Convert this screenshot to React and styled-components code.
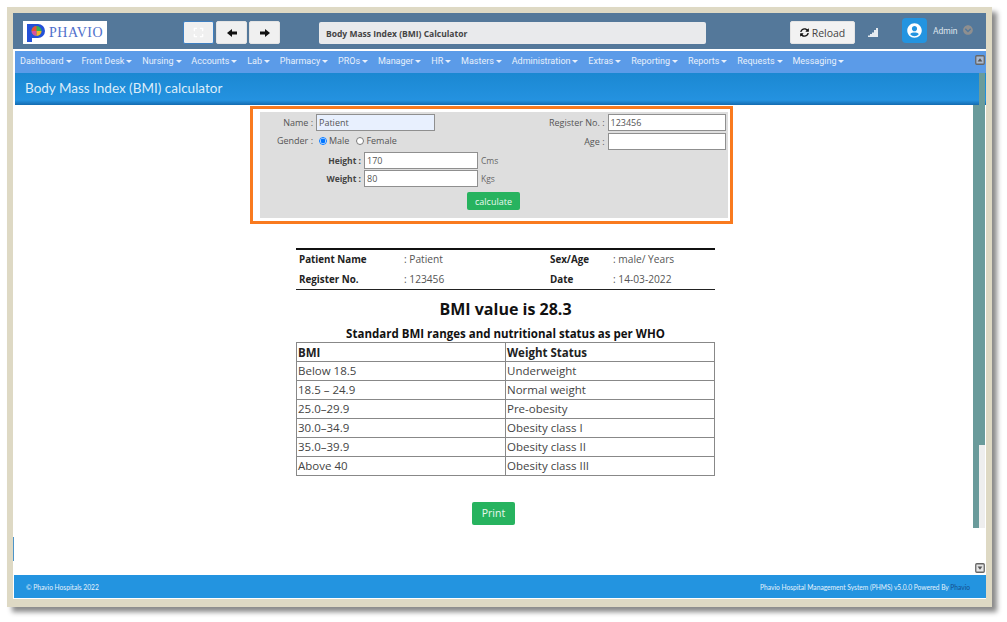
import React from 'react';
import styled, { createGlobalStyle } from 'styled-components';
import { FaExpand, FaSyncAlt, FaUserCircle, FaChevronCircleDown } from 'react-icons/fa';

const GlobalStyle = createGlobalStyle`
  html, body {
    margin: 0;
    padding: 0;
    background: #fff;
    overflow: hidden;
  }
  * { box-sizing: border-box; }
`;

const Page = styled.div`
  width: 1007px;
  height: 622px;
  padding: 7px 0 0 7px;
  font-family: "Open Sans", sans-serif;
`;

const Frame = styled.div`
  position: relative;
  width: 985px;
  height: 600px;
  border: solid #ded9c4;
  border-width: 6px 6px 8px 6px;
  box-shadow: 5px 5px 5px #8a8a8a;
  background: #fff;
  display: flex;
  flex-direction: column;
`;

const TopBar = styled.header`
  height: 36px;
  flex: none;
  display: flex;
  align-items: flex-start;
  padding: 8px 0 0 10px;
  background: #54789a;
`;

const Logo = styled.div`
  width: 84px;
  height: 23px;
  background: #fff;
  display: flex;
  align-items: center;
  gap: 2px;
  padding-left: 3px;
  margin-right: 76px;
`;

const LogoText = styled.span`
  font-family: "Liberation Serif", serif;
  font-size: 14px;
  letter-spacing: 0.5px;
  color: #4f70cc;
`;

const IconButton = styled.button`
  width: 31px;
  height: 23px;
  margin-right: 2px;
  padding: 0;
  display: flex;
  align-items: center;
  justify-content: center;
  background: #f0f0f0;
  border: 1px solid ${(p) => (p.$focused ? '#3f7fc0' : '#e4e4e4')};
  border-radius: 2px;
  color: ${(p) => (p.$focused ? '#fff' : '#111')};
  font-size: 11px;
`;

const PageName = styled.div`
  width: 387px;
  height: 22px;
  margin: 1px 84px 0 37px;
  padding-left: 7px;
  display: flex;
  align-items: center;
  background: #e9eaec;
  border-radius: 2px;
  font-size: 8.5px;
  font-weight: 700;
  color: #444;
`;

const ReloadButton = styled.button`
  width: 65px;
  height: 23px;
  margin-right: 13px;
  padding: 0;
  display: flex;
  align-items: center;
  justify-content: center;
  gap: 3px;
  background: #f2f2f2;
  border: 1px solid #e4e4e4;
  border-radius: 2px;
  font-family: "Open Sans", sans-serif;
  font-size: 10.5px;
  color: #444;
  svg { font-size: 9px; color: #111; }
`;

const SignalIcon = styled.svg`
  width: 10px;
  height: 9px;
  margin: 7px 24px 0 0;
  flex: none;
`;

const Avatar = styled.div`
  width: 25px;
  height: 25px;
  margin: -3px 6px 0 0;
  border-radius: 4px;
  background: #2394e0;
  display: flex;
  align-items: center;
  justify-content: center;
  color: #fff;
  font-size: 15px;
`;

const UserName = styled.span`
  font-family: "Roboto", sans-serif;
  font-size: 8.5px;
  color: #dfe6ee;
  line-height: 20px;
  margin-right: 5px;
  width: 25px;
`;

const UserCaret = styled.span`
  color: #8f8f8f;
  font-size: 10px;
  line-height: 1;
  margin-top: 4px;
`;

const NavBar = styled.nav`
  position: relative;
  height: 22px;
  flex: none;
  margin: 2px 0 0 2px;
  padding: 0 0 2px 5px;
  display: flex;
  align-items: center;
  gap: 9.85px;
  background: #5b9be8;
`;

const NavItem = styled.span`
  font-family: "Roboto", sans-serif;
  font-size: 9px;
  color: #e8f0fb;
  display: flex;
  align-items: center;
  gap: 2px;
  white-space: nowrap;
  &::after {
    content: "";
    border-top: 3px solid #e8f0fb;
    border-left: 3px solid transparent;
    border-right: 3px solid transparent;
  }
`;

const ScrollButton = styled.svg`
  position: absolute;
  width: 10px;
  height: 10px;
  right: ${(p) => p.$right}px;
  top: ${(p) => p.$top}px;
`;

const TitleBar = styled.div`
  height: 32px;
  flex: none;
  margin-left: 2px;
  padding: 0 0 2px 10px;
  display: flex;
  align-items: center;
  background: linear-gradient(#1b88d2, #2492e0 85%, #146bb0);
  font-family: "Lato", sans-serif;
  font-size: 13.5px;
  color: #dcecf9;
`;

const Main = styled.main`
  flex: 1;
  min-height: 0;
  margin-left: 2px;
  position: relative;
`;

const FormBox = styled.div`
  width: 483px;
  height: 118px;
  margin: 1px 0 0 235px;
  padding: 3px 2px 2px 7px;
  border: 3px solid #f97a1f;
  background: #fff;
`;

const FormPanel = styled.div`
  height: 106px;
  padding: 2px 1px 0 0;
  background: #dedede;
  font-size: 9px;
  color: #555;
`;

const TopFields = styled.div`
  display: grid;
  grid-template-columns: 1fr 1fr;
`;

const FieldColumn = styled.div`
  display: flex;
  flex-direction: column;
  gap: 2px;
`;

const FieldRow = styled.div`
  height: 17px;
  padding-bottom: ${(p) => (p.$raised ? '2px' : '0')};
  display: flex;
  align-items: center;
`;

const FieldLabel = styled.label`
  width: ${(p) => p.$width}px;
  margin-right: 3px;
  text-align: right;
  white-space: nowrap;
  font-weight: ${(p) => (p.$bold ? 700 : 400)};
  font-size: ${(p) => (p.$bold ? '8.5px' : '9px')};
  color: ${(p) => (p.$bold ? '#444' : '#555')};
`;

const TextBox = styled.input`
  width: ${(p) => p.$width}px;
  height: 17px;
  padding: 0 2px;
  border: 1px solid #8f8f8f;
  background: ${(p) => (p.$filled ? '#e8f0fe' : '#fff')};
  font-family: "Open Sans", sans-serif;
  font-size: 9px;
  color: #555;
  outline: none;
`;

const RadioRow = styled.div`
  display: flex;
  align-items: center;
  gap: 2px;
  margin-left: 3px;
`;

const Radio = styled.input`
  width: 8px;
  height: 8px;
  margin: 0 0 0 ${(p) => p.$gap || 0}px;
`;

const Measurements = styled.div`
  margin-top: 2px;
  display: flex;
  flex-direction: column;
  gap: 1px;
`;

const Unit = styled.span`
  margin-left: 3px;
  font-size: 8.5px;
  color: #666;
`;

const ButtonRow = styled.div`
  margin-top: 5px;
  display: flex;
  justify-content: center;
`;

const GreenButton = styled.button`
  width: ${(p) => p.$width}px;
  height: ${(p) => p.$height}px;
  padding: 0;
  border: none;
  border-radius: 2px;
  background: #27b35f;
  color: #e9f8ef;
  font-family: "Open Sans", sans-serif;
  font-size: ${(p) => p.$size}px;
`;

const Report = styled.section`
  width: 419px;
  margin: 24px 0 0 281px;
`;

const InfoGrid = styled.div`
  height: 42px;
  border-top: 2px solid #111;
  border-bottom: 1px solid #222;
  padding-left: 3px;
  display: grid;
  grid-template-columns: 105px 146px 63px 1fr;
  grid-auto-rows: 18px;
  row-gap: 2px;
  align-items: center;
  font-size: 10.2px;
  color: #555;
`;

const InfoKey = styled.b`
  font-size: 9.8px;
  color: #222;
`;

const BmiValue = styled.h2`
  margin: 8px 0 0;
  text-align: center;
  font-size: 16px;
  line-height: 22px;
  font-weight: 700;
  color: #111;
`;

const RangesTitle = styled.h3`
  margin: 6px 0 0;
  text-align: center;
  font-size: 11.5px;
  line-height: 16px;
  font-weight: 700;
  color: #111;
`;

const RangesTable = styled.table`
  width: 100%;
  table-layout: fixed;
  border-collapse: collapse;
  font-size: 11.5px;
  color: #444;
`;

const HeadCell = styled.th`
  height: 19px;
  padding: 0 1px;
  border: 1px solid #888;
  text-align: left;
  font-weight: 700;
  color: #222;
`;

const Cell = styled.td`
  height: 19px;
  padding: 0 1px 1px;
  border: 1px solid #888;
`;

const PrintRow = styled.div`
  margin: 24px 0 0 457px;
`;

const Thumb = styled.div`
  position: absolute;
  width: 6px;
  background: ${(p) => p.$color};
  left: ${(p) => p.$left}px;
  top: ${(p) => p.$top}px;
  height: ${(p) => p.$height}px;
`;

const EdgeMark = styled.div`
  position: absolute;
  left: 0;
  top: 524px;
  width: 1px;
  height: 24px;
  background: #4d94c9;
`;

const Footer = styled.footer`
  height: 23px;
  flex: none;
  margin: 0 0 1px 1px;
  padding: 0 16px 0 12px;
  display: flex;
  align-items: center;
  justify-content: space-between;
  background: #2394e0;
  font-family: "Lato", sans-serif;
  font-size: 6.65px;
  color: #e4f1fb;
`;

const PoweredBy = styled.span`
  color: #15508f;
`;

const menus = [
  'Dashboard', 'Front Desk', 'Nursing', 'Accounts', 'Lab', 'Pharmacy', 'PROs', 'Manager',
  'HR', 'Masters', 'Administration', 'Extras', 'Reporting', 'Reports', 'Requests', 'Messaging',
];

const ranges = [
  ['Below 18.5', 'Underweight'],
  ['18.5 – 24.9', 'Normal weight'],
  ['25.0–29.9', 'Pre-obesity'],
  ['30.0–34.9', 'Obesity class I'],
  ['35.0–39.9', 'Obesity class II'],
  ['Above 40', 'Obesity class III'],
];

const ArrowBox = ({ up, right, top }) => (
  <ScrollButton $right={right} $top={top} viewBox="0 0 10 10">
    <rect x="0.75" y="0.75" width="8.5" height="8.5" rx="1" fill={up ? '#a9b9d0' : '#e6e6e6'} stroke="#666" strokeWidth="1.3" />
    <path d={up ? 'M5 3.2 7.4 6.6H2.6Z' : 'M5 6.8 2.6 3.4H7.4Z'} fill="#555" />
  </ScrollButton>
);

// short blocky arrow from the toolbar, flipped for "forward"
const BlockArrow = ({ forward }) => (
  <svg width="10" height="8" viewBox="0 0 10 8" style={forward ? { transform: 'scaleX(-1)' } : undefined}>
    <path d="M0 4 5 0V2.5H10V5.5H5V8Z" fill="#111" />
  </svg>
);

const App = () => {
  return (
    <Page>
      <GlobalStyle />
      <Frame>
        <TopBar>
          <Logo>
            <svg width="21" height="20" viewBox="0 0 21 20">
              <path d="M1 1h11a7 7 0 0 1 0 14H6v4H1Z" fill="#2450d8" />
              <circle cx="10.5" cy="8" r="5" fill="#37b24d" />
              <path d="M10.5 3a5 5 0 0 0-5 5h5Z" fill="#e8503a" />
              <path d="M10.5 8v5a5 5 0 0 0 5-5Z" fill="#f0b429" />
              <path d="M5.5 8a5 5 0 0 0 5 5V8Z" fill="#d64fa0" />
            </svg>
            <LogoText>PHAVIO</LogoText>
          </Logo>
          <IconButton $focused><FaExpand /></IconButton>
          <IconButton><BlockArrow /></IconButton>
          <IconButton><BlockArrow forward /></IconButton>
          <PageName>Body Mass Index (BMI) Calculator</PageName>
          <ReloadButton><FaSyncAlt />Reload</ReloadButton>
          <SignalIcon viewBox="0 0 10 9">
            <path d="M0 9V7.5h2V6h2V4.5h2V2h2V0h2v9Z" fill="#e6ebf0" />
          </SignalIcon>
          <Avatar><FaUserCircle /></Avatar>
          <UserName>Admin</UserName>
          <UserCaret><FaChevronCircleDown /></UserCaret>
        </TopBar>

        <NavBar>
          {menus.map((name) => (
            <NavItem key={name}>{name}</NavItem>
          ))}
          <ArrowBox up right={1} top={4} />
        </NavBar>

        <TitleBar>Body Mass Index (BMI) calculator</TitleBar>

        <Main>
          <FormBox>
            <FormPanel>
              <TopFields>
                <FieldColumn>
                  <FieldRow>
                    <FieldLabel $width={53}>Name :</FieldLabel>
                    <TextBox $width={119} $filled defaultValue="Patient" />
                  </FieldRow>
                  <FieldRow $raised>
                    <FieldLabel $width={53}>Gender :</FieldLabel>
                    <RadioRow>
                      <Radio type="radio" name="gender" defaultChecked />
                      <span>Male</span>
                      <Radio type="radio" name="gender" $gap={5} />
                      <span>Female</span>
                    </RadioRow>
                  </FieldRow>
                </FieldColumn>
                <FieldColumn>
                  <FieldRow>
                    <FieldLabel $width={111}>Register No. :</FieldLabel>
                    <TextBox $width={118} defaultValue="123456" />
                  </FieldRow>
                  <FieldRow>
                    <FieldLabel $width={111}>Age :</FieldLabel>
                    <TextBox $width={118} />
                  </FieldRow>
                </FieldColumn>
              </TopFields>
              <Measurements>
                <FieldRow>
                  <FieldLabel $width={101} $bold>Height :</FieldLabel>
                  <TextBox $width={114} defaultValue="170" />
                  <Unit>Cms</Unit>
                </FieldRow>
                <FieldRow>
                  <FieldLabel $width={101} $bold>Weight :</FieldLabel>
                  <TextBox $width={114} defaultValue="80" />
                  <Unit>Kgs</Unit>
                </FieldRow>
              </Measurements>
              <ButtonRow>
                <GreenButton $width={53} $height={18} $size={9}>calculate</GreenButton>
              </ButtonRow>
            </FormPanel>
          </FormBox>

          <Report>
            <InfoGrid>
              <InfoKey>Patient Name</InfoKey>
              <span>: Patient</span>
              <InfoKey>Sex/Age</InfoKey>
              <span>: male/ Years</span>
              <InfoKey>Register No.</InfoKey>
              <span>: 123456</span>
              <InfoKey>Date</InfoKey>
              <span>: 14-03-2022</span>
            </InfoGrid>
            <BmiValue>BMI value is 28.3</BmiValue>
            <RangesTitle>Standard BMI ranges and nutritional status as per WHO</RangesTitle>
            <RangesTable>
              <thead>
                <tr>
                  <HeadCell>BMI</HeadCell>
                  <HeadCell>Weight Status</HeadCell>
                </tr>
              </thead>
              <tbody>
                {ranges.map(([bmi, status]) => (
                  <tr key={bmi}>
                    <Cell>{bmi}</Cell>
                    <Cell>{status}</Cell>
                  </tr>
                ))}
              </tbody>
            </RangesTable>
          </Report>

          <PrintRow>
            <GreenButton $width={43} $height={23} $size={10.5}>Print</GreenButton>
          </PrintRow>

          <ArrowBox right={1} top={458} />
        </Main>

        <Footer>
          <span>© Phavio Hospitals 2022</span>
          <span>Phavio Hospital Management System (PHMS) v5.0.0 Powered By <PoweredBy>Phavio</PoweredBy></span>
        </Footer>

        <Thumb $color="#6a9b9b" $left={966} $top={60} $height={372} />
        <Thumb $color="#eeeeee" $left={966} $top={432} $height={83} />
        <Thumb $color="#6a9b9b" $left={960} $top={92} $height={423} />
        <EdgeMark />
      </Frame>
    </Page>
  );
};

export default App;
